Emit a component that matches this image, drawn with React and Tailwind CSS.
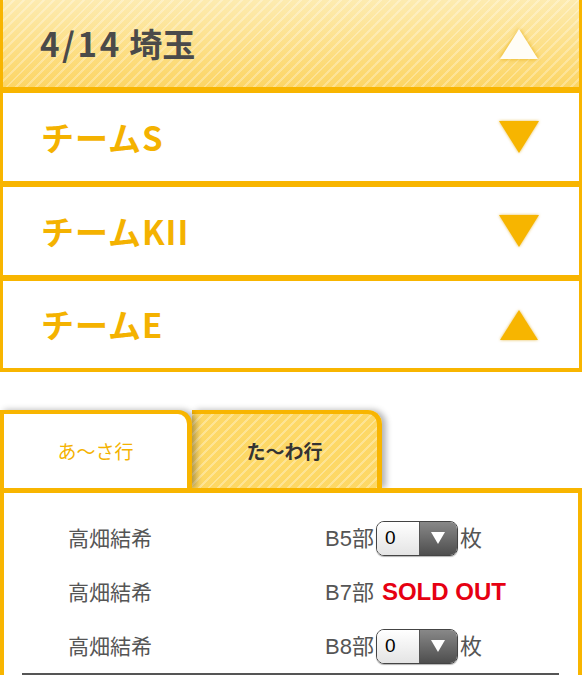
import React from 'react';

const JP = "font-['Noto_Sans_CJK_JP',sans-serif]";
const LATIN = "font-['Liberation_Sans','Noto_Sans_CJK_JP',sans-serif]";

function Triangle({ up, white }) {
  return (
    <svg width="44" height="36" viewBox="0 0 44 36" className={white ? 'drop-shadow-[0_0_2px_rgba(230,170,0,0.9)]' : 'drop-shadow-[0_0_1.5px_rgba(220,160,0,0.7)]'}>
      {up ? (
        <polygon points="22,3 41,33 3,33" fill={white ? '#fffdf6' : '#f7b500'} />
      ) : (
        <polygon points="2,2 42,2 22,34" fill={white ? '#fffdf6' : '#f7b500'} />
      )}
    </svg>
  );
}

function TeamRow({ name, up, last }) {
  return (
    <div className={`flex items-center justify-between bg-white border-x-[3px] border-[#f8b500] pl-[38px] pr-[38px] ${last ? 'h-[91px] border-b-[4px]' : 'h-[94px] border-b-[6px]'}`}>
      <span className={`${JP} text-[33px] font-bold tracking-[0.03em] text-[#f4b200] leading-none`}>{name}</span>
      <Triangle up={up} />
    </div>
  );
}

function Qty() {
  return (
    <div className="flex h-[35px] w-[82px] overflow-hidden rounded-[8px] border border-[#444] shadow-[0_1px_1px_rgba(0,0,0,0.3)]">
      <div className={`flex flex-1 items-center pl-[8px] bg-[linear-gradient(#ffffff,#e4e4e4)] text-[19px] text-black ${LATIN}`}>0</div>
      <div className="flex w-[38px] items-center justify-center border-l border-[#555] bg-[linear-gradient(#888,#4e4e4e)]">
        <svg width="14" height="12" viewBox="0 0 14 12"><polygon points="0,0 14,0 7,12" fill="#fff" /></svg>
      </div>
    </div>
  );
}

function MemberRow({ part, sold }) {
  return (
    <div className="grid h-[54px] grid-cols-[257px_1fr] items-center pl-[64px]">
      <span className={`${JP} text-[21px] text-[#555]`}>高畑結希</span>
      <div className={`flex items-center ${LATIN} text-[22px] text-[#555]`}>
        <span className="mr-[2px]">{part}部</span>
        {sold ? (
          <span className="ml-[6px] text-[24px] font-bold text-[#e60012]">SOLD OUT</span>
        ) : (
          <>
            <Qty />
            <span className="ml-[2px]">枚</span>
          </>
        )}
      </div>
    </div>
  );
}

export default function App() {
  const stripes = 'bg-[repeating-linear-gradient(135deg,rgba(255,255,255,0.28)_0_2px,transparent_2px_7px),linear-gradient(#fdebb0,#fcd564)]';

  return (
    <div className="w-[582px] h-[680px] overflow-hidden bg-white">
      {/* Date header */}
      <div className={`flex h-[93px] items-center justify-between border-x-[3px] border-b-[6px] border-[#f8b500] pl-[37px] pr-[38px] ${stripes}`}>
        <span className={`${JP} text-[33px] font-bold text-[#4a4a4a] leading-none`}>
          <span className="tracking-[0.08em]">4/14</span> 埼玉
        </span>
        <Triangle up white />
      </div>

      <TeamRow name="チームS" />
      <TeamRow name="チームKII" />
      <TeamRow name="チームE" up last />

      {/* Tabs */}
      <div className="mt-[38px] flex h-[78px]">
        <div className={`relative z-10 flex w-[192px] items-center justify-center rounded-tr-[14px] border-t-[4px] border-l-[4px] border-r-[5px] border-[#f8b500] bg-white shadow-[4px_0_6px_rgba(0,0,0,0.3)] ${JP} text-[19px] text-[#f4b200]`}>
          あ〜さ行
        </div>
        <div className={`flex w-[190px] items-center justify-center rounded-tr-[14px] border-t-[4px] border-r-[5px] border-[#f8b500] shadow-[4px_0_6px_rgba(0,0,0,0.3)] bg-[repeating-linear-gradient(135deg,rgba(255,255,255,0.3)_0_2px,transparent_2px_7px),linear-gradient(#fdd866,#fdd866)] ${JP} text-[19px] font-bold text-[#333]`}>
          た〜わ行
        </div>
      </div>

      {/* Member list */}
      <div className="relative z-20 border-x-[4px] border-t-[5px] border-[#f8b500] bg-white pt-[18px]">
        <MemberRow part="B5" />
        <MemberRow part="B7" sold />
        <MemberRow part="B8" />
        <div className="ml-[18px] mr-[19px] h-[2px] bg-[#555]" />
      </div>
    </div>
  );
}
